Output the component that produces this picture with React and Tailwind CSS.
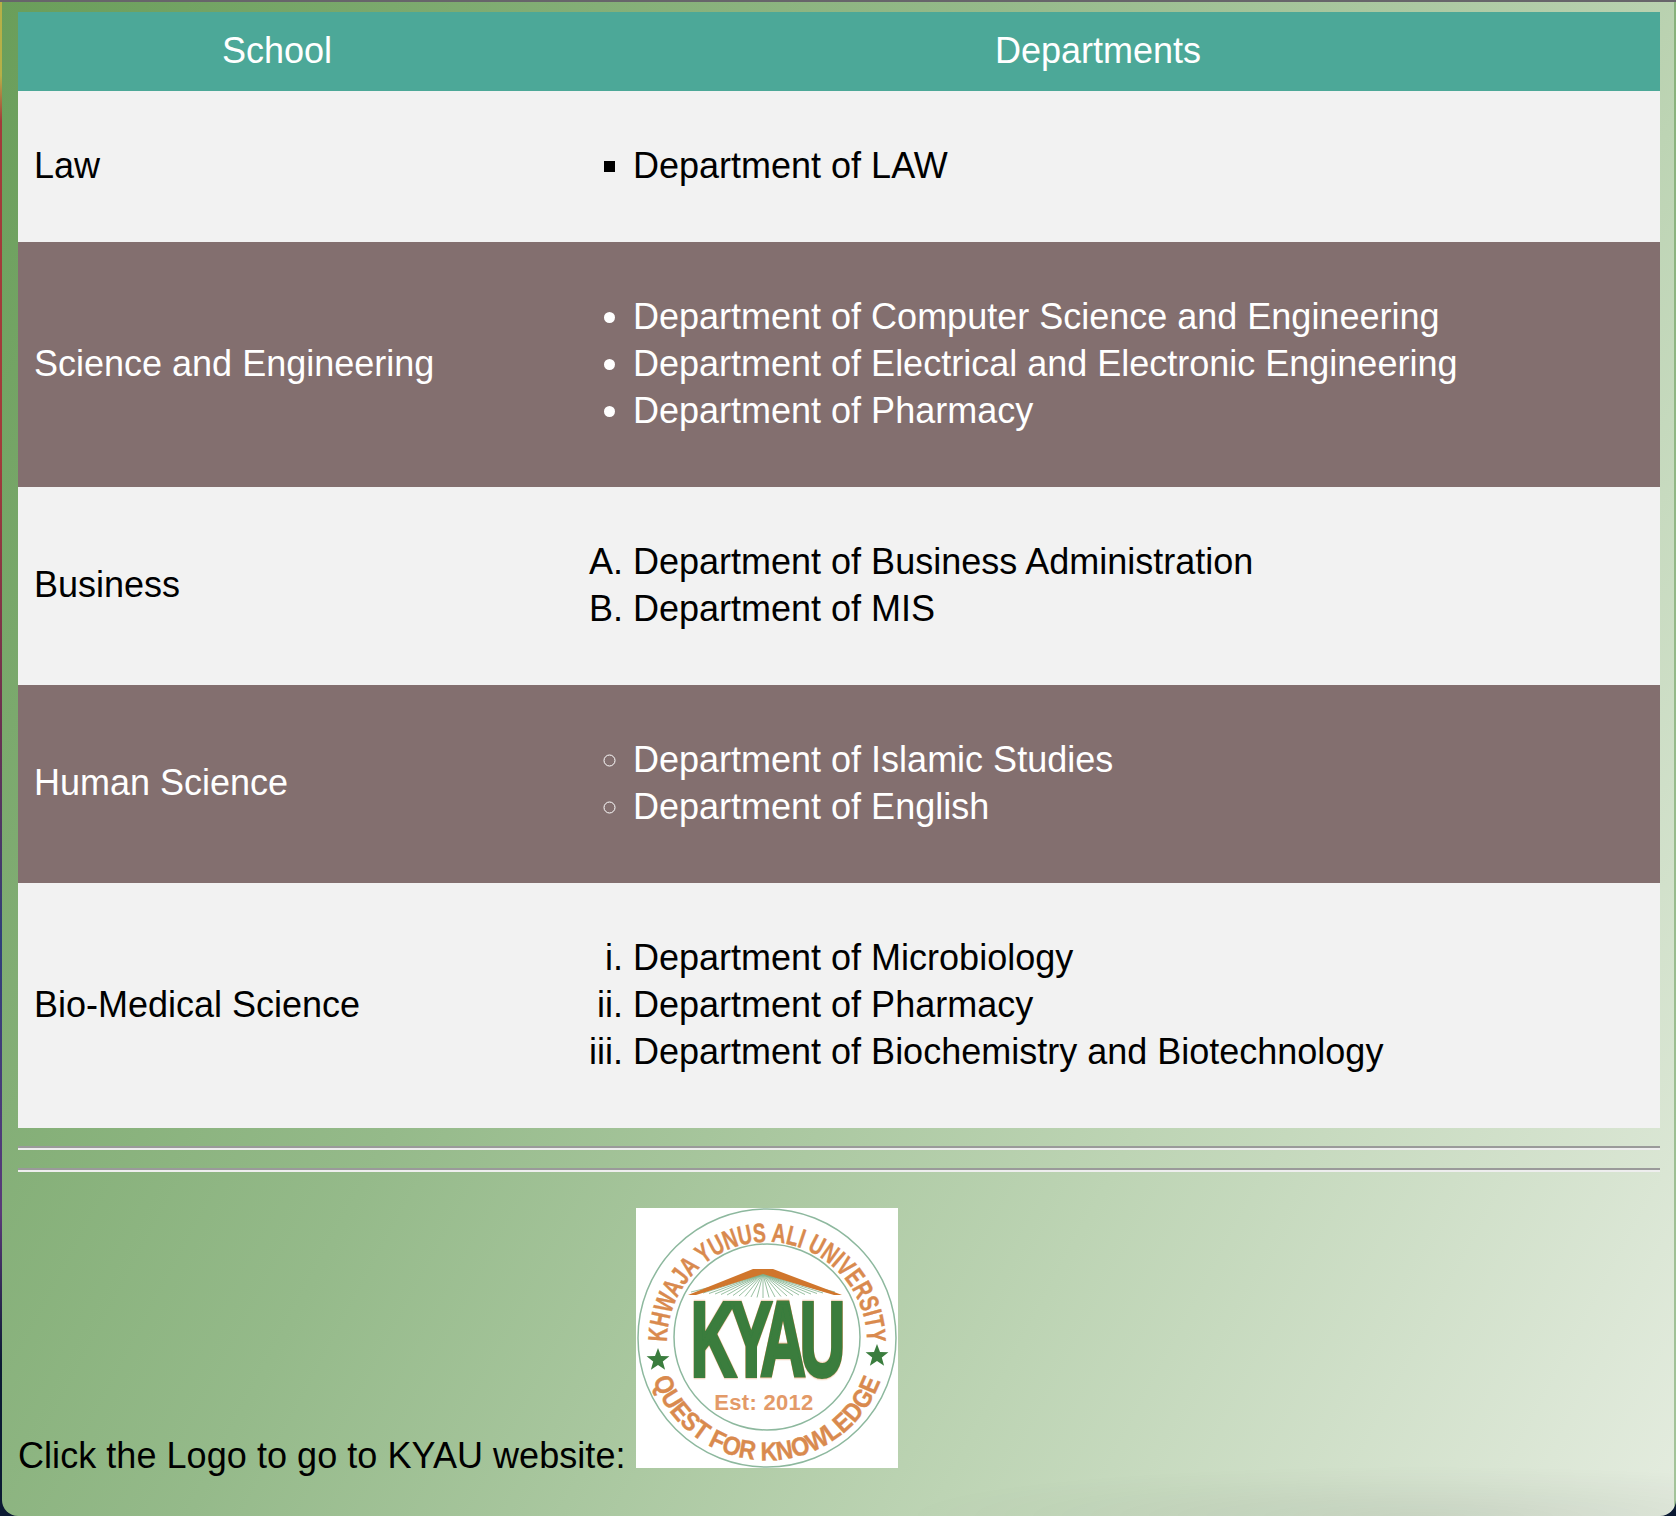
const rows = [
  { school: 'Law', dark: false, list: 'ul', style: 'list-[square]', items: ['Department of LAW'] },
  {
    school: 'Science and Engineering',
    dark: true,
    list: 'ul',
    style: 'list-disc',
    items: [
      'Department of Computer Science and Engineering',
      'Department of Electrical and Electronic Engineering',
      'Department of Pharmacy',
    ],
  },
  {
    school: 'Business',
    dark: false,
    list: 'ol',
    style: 'list-[upper-alpha]',
    items: ['Department of Business Administration', 'Department of MIS'],
  },
  {
    school: 'Human Science',
    dark: true,
    list: 'ul',
    style: 'list-[circle]',
    items: ['Department of Islamic Studies', 'Department of English'],
  },
  {
    school: 'Bio-Medical Science',
    dark: false,
    list: 'ol',
    style: 'list-[lower-roman]',
    items: ['Department of Microbiology', 'Department of Pharmacy', 'Department of Biochemistry and Biotechnology'],
  },
]

// five pointed star for the logo ring
const starPoints = (cx, cy, r) => {
  const pts = []
  for (let i = 0; i < 10; i++) {
    const radius = i % 2 === 0 ? r : r * 0.42
    const angle = (Math.PI / 5) * i - Math.PI / 2
    pts.push(`${(cx + radius * Math.cos(angle)).toFixed(1)},${(cy + radius * Math.sin(angle)).toFixed(1)}`)
  }
  return pts.join(' ')
}

function Logo() {
  const rays = []
  for (let i = -12; i <= 12; i++) {
    rays.push(<line key={i} x1={127} y1={66} x2={127 + i * 6} y2={90 - Math.abs(i) * 0.5} stroke="#7fb08a" strokeWidth="0.8" />)
  }
  return (
    <svg width="262" height="260" viewBox="0 0 262 260" className="inline align-baseline bg-white">
      <defs>
        <path id="logo-top" d="M 31 134 A 100 100 0 1 1 231 134" />
        <path id="logo-bottom" d="M 17 172 A 121 121 0 0 0 245 172" />
        <filter id="logo-halo" x="-10%" y="-10%" width="120%" height="120%">
          <feDropShadow dx="0" dy="0" stdDeviation="1" floodColor="#d98a4e" />
        </filter>
      </defs>
      <circle cx="131" cy="130" r="129" fill="none" stroke="#8db89e" strokeWidth="1.5" />
      <circle cx="131" cy="129" r="93" fill="none" stroke="#8db89e" strokeWidth="1.5" />
      <text fontFamily="'Liberation Sans', sans-serif" fontWeight="700" fontSize="27" fill="#d98a4e" stroke="#d98a4e" strokeWidth="0.4">
        <textPath href="#logo-top" startOffset="0" textLength="314" lengthAdjust="spacingAndGlyphs">KHWAJA YUNUS ALI UNIVERSITY</textPath>
      </text>
      <text fontFamily="'Liberation Sans', sans-serif" fontWeight="700" fontSize="26" fill="#d98a4e" stroke="#d98a4e" strokeWidth="0.4">
        <textPath href="#logo-bottom" startOffset="0" textLength="296" lengthAdjust="spacingAndGlyphs">QUEST FOR KNOWLEDGE</textPath>
      </text>
      <polygon points={starPoints(22, 152, 12)} fill="#3a7d3e" />
      <polygon points={starPoints(241, 148, 12)} fill="#3a7d3e" />
      {rays}
      <polygon points="52,87 117,61 137,61 206,87 198,87 127,66 60,87" fill="#d0762c" />
      <g transform="translate(129 168) scale(0.6 1)" filter="url(#logo-halo)">
        <text
          textAnchor="middle"
          fontFamily="'Liberation Sans', sans-serif"
          fontWeight="700"
          fontSize="105"
          letterSpacing="-10"
          fill="#3a7d3e"
          stroke="#3a7d3e"
          strokeWidth="4"
        >
          KYAU
        </text>
      </g>
      <text x="128" y="202" textAnchor="middle" fontFamily="'Liberation Sans', sans-serif" fontWeight="700" fontSize="22" letterSpacing="0.3" fill="#e39a68">
        Est: 2012
      </text>
    </svg>
  )
}

export default function App() {
  return (
    <div className="w-[1676px] h-[1516px] overflow-hidden bg-[linear-gradient(180deg,#b6b048_0%,#b6b048_5%,#a33a3a_8%,#a33a3a_30%,#6a3050_48%,#2f3f7a_62%,#5a3a78_80%,#0b1a33_90%,#0b1a33_100%)] font-['Liberation_Sans',Arial,sans-serif] text-[36px] leading-[47px] text-black">
      <div className="h-[2px] bg-[#67656a]" />
      <div className="ml-[2px] h-[1514px] rounded-b-[16px] overflow-hidden border-r-2 border-white/20 bg-[radial-gradient(ellipse_520px_50px_at_85%_100%,rgba(0,0,0,0.07),transparent),linear-gradient(118deg,#6a9e5a_0%,#95ba8a_40%,#bdd4b4_70%,#e4ecdf_100%)]">
        <div className="pl-[16px] pt-[10px]">
          <table className="w-[1642px] table-fixed border-collapse">
            <thead>
              <tr className="bg-[#4ca898] text-white">
                <th className="w-[518px] h-[79px] px-4 pt-[15px] pb-[17px] font-normal text-center">School</th>
                <th className="h-[79px] px-4 pt-[15px] pb-[17px] font-normal text-center">Departments</th>
              </tr>
            </thead>
            <tbody>
              {rows.map((row) => {
                const List = row.list
                return (
                  <tr key={row.school} className={row.dark ? 'bg-[#836f6f] text-white' : 'bg-[#f2f2f2] text-black'}>
                    <td className={row.items.length === 2 ? 'px-4 pt-[14px] pb-[18px] align-middle' : 'px-4 pt-[15px] pb-[17px] align-middle'}>
                      {row.school}
                    </td>
                    <td className="px-4 pt-[15px] pb-[17px] align-middle">
                      <List className={`my-9 pl-[81px] ${row.style}`}>
                        {row.items.map((item) => (
                          <li key={item}>{item}</li>
                        ))}
                      </List>
                    </td>
                  </tr>
                )
              })}
            </tbody>
          </table>
          <hr className="mt-[18px] w-[1642px] h-[4px] border-0 bg-[linear-gradient(#9a9a9a_50%,#eeeeee_50%)]" />
          <hr className="mt-[18px] w-[1642px] h-[4px] border-0 bg-[linear-gradient(#9a9a9a_50%,#eeeeee_50%)]" />
          <p className="mt-[36px] tracking-[0.05px]">
            Click the Logo to go to KYAU website: <Logo />
          </p>
        </div>
      </div>
    </div>
  )
}
